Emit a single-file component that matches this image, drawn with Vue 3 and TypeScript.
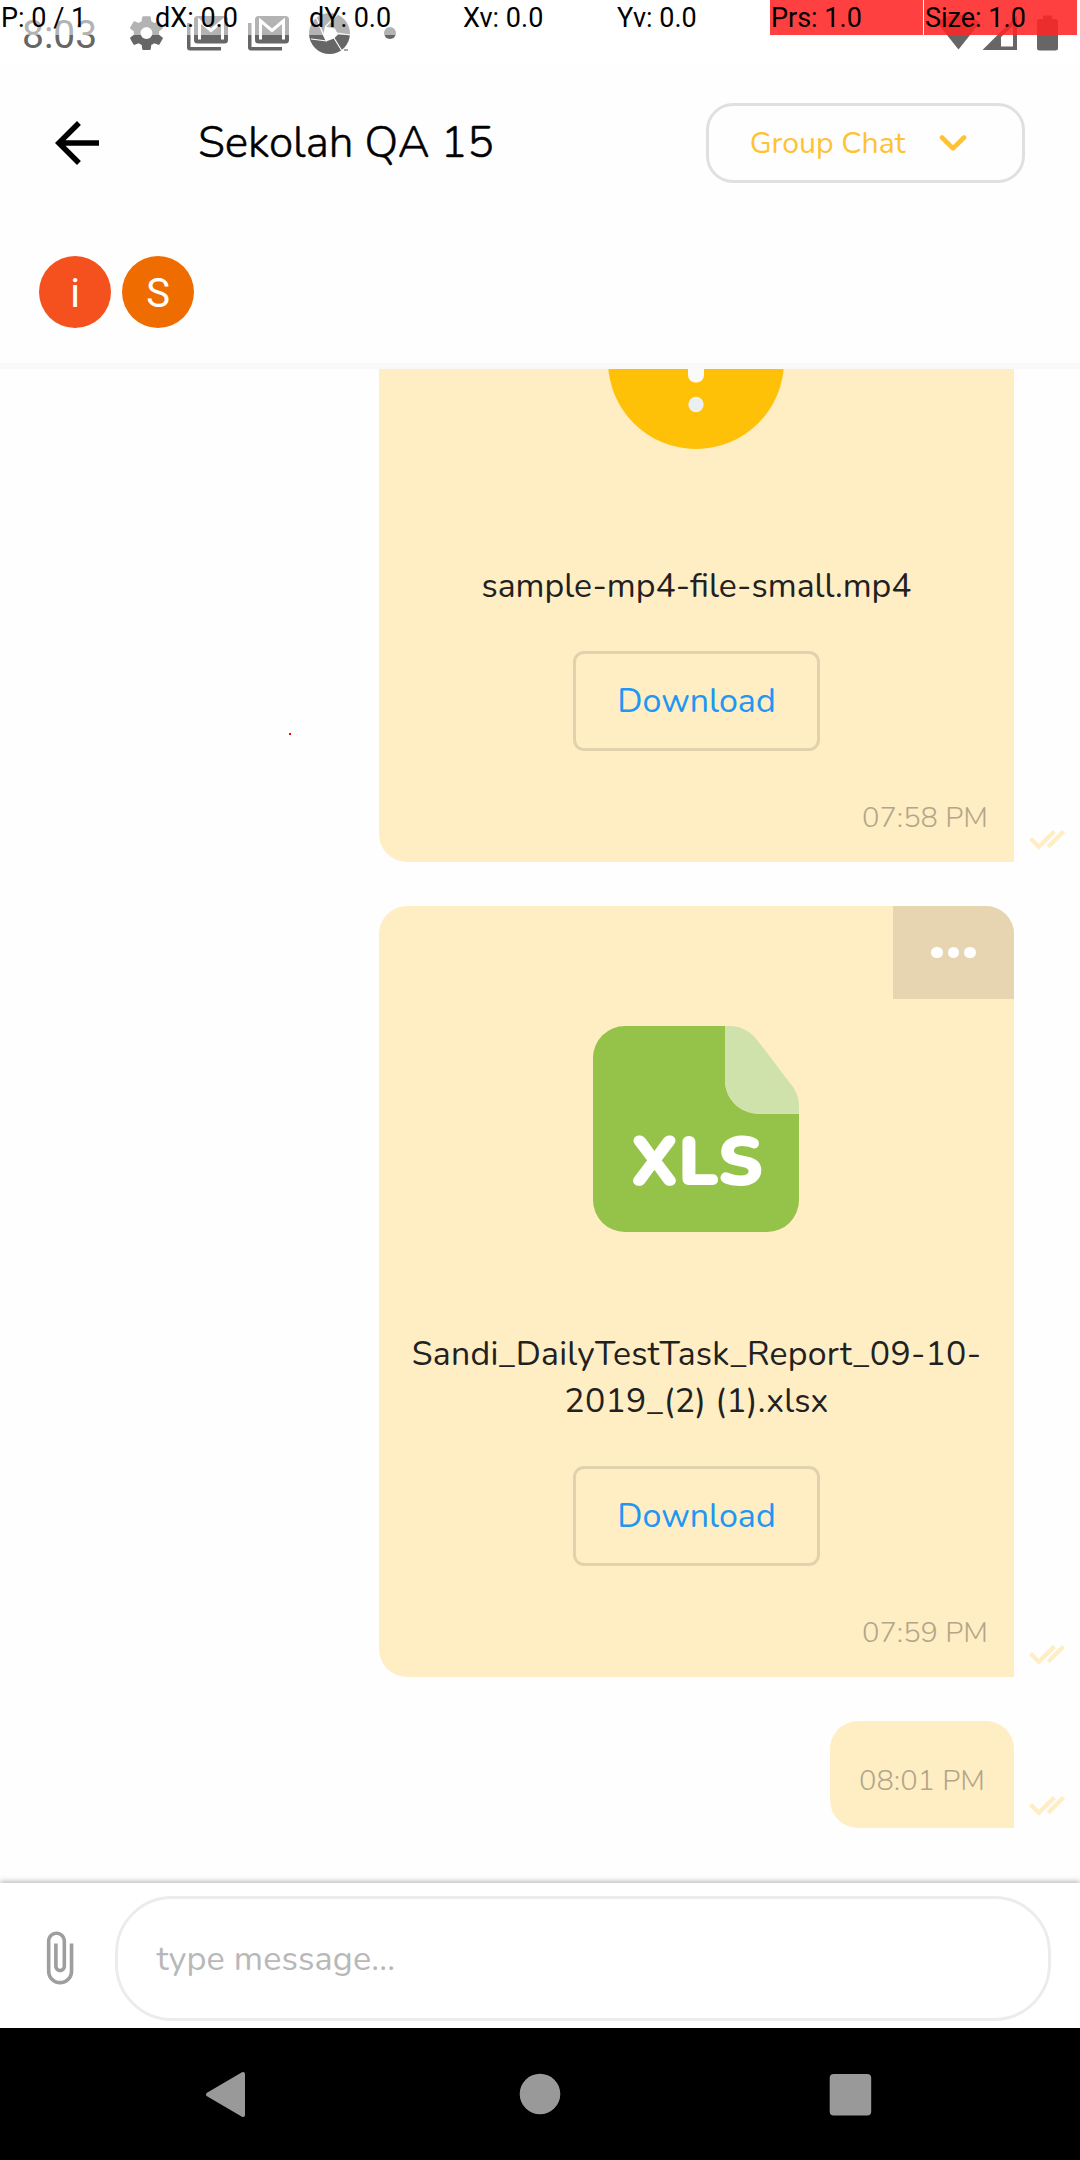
<script setup lang="ts">
interface Message {
  id: number
  time: string
  file?: string
  kind?: 'warning' | 'xls'
  menu?: boolean
}

const pointerStats = ['P: 0 / 1', 'dX: 0.0', 'dY: 0.0', 'Xv: 0.0', 'Yv: 0.0', 'Prs: 1.0', 'Size: 1.0']

const members = [
  { initial: 'i', tone: 'deep' },
  { initial: 'S', tone: 'orange' },
]

const messages: Message[] = [
  { id: 1, kind: 'warning', file: 'sample-mp4-file-small.mp4', time: '07:58 PM' },
  { id: 2, kind: 'xls', file: 'Sandi_DailyTestTask_Report_09-10-2019_(2) (1).xlsx', time: '07:59 PM', menu: true },
  { id: 3, time: '08:01 PM' },
]
</script>

<template>
  <div class="screen">
    <div class="status">
      <span class="clock">8:03</span>
      <svg class="status-icons" width="985" height="63" viewBox="95 0 985 63" fill="#666">
        <!-- settings -->
        <path transform="translate(126.2 12.8) scale(1.69)" fill-rule="evenodd" d="M19.43 12.98c.04-.32.07-.64.07-.98s-.03-.66-.07-.98l2.11-1.65c.19-.15.24-.42.12-.64l-2-3.46c-.12-.22-.39-.3-.61-.22l-2.49 1c-.52-.4-1.08-.73-1.69-.98l-.38-2.65C14.46 2.18 14.25 2 14 2h-4c-.25 0-.46.18-.49.42l-.38 2.65c-.61.25-1.17.59-1.69.98l-2.49-1c-.23-.09-.49 0-.61.22l-2 3.46c-.13.22-.07.49.12.64l2.11 1.65c-.04.32-.07.65-.07.98s.03.66.07.98l-2.11 1.65c-.19.15-.24.42-.12.64l2 3.46c.12.22.39.3.61.22l2.49-1c.52.4 1.08.73 1.69.98l.38 2.65c.03.24.24.42.49.42h4c.25 0 .46-.18.49-.42l.38-2.65c.61-.25 1.17-.59 1.69-.98l2.49 1c.23.09.49 0 .61-.22l2-3.46c.12-.22.07-.49-.12-.64l-2.11-1.65zM12 15.500c-1.930 0-3.500-1.570-3.500-3.500s1.570-3.500 3.500-3.500 3.500 1.570 3.500 3.500-1.570 3.500-3.500 3.500z" />
        <!-- stacked mail notifications -->
        <g v-for="x in [187, 248]" :key="x" :transform="`translate(${x} 16)`">
          <path d="M0 7h3.500v24H34v3.500H3a3 3 0 0 1-3-3z" />
          <rect x="7" y="0" width="34" height="27.500" rx="3.500" />
          <path d="M12.500 23.500V4.800l11.500 9.700L35.500 4.800v18.700" fill="none" stroke="#fff" stroke-width="3" />
        </g>
        <!-- camera shutter -->
        <circle cx="329.500" cy="33.500" r="20.500" />
        <path d="M325 26.500l10 2 3 6-4 4-8 3-3-6z" fill="#fff" />
        <path d="M325 27l13-13M337 33l13 2M334 38l8 13M327 41l-16-2M323.500 35l-7-17" stroke="#fff" stroke-width="1.200" />
        <path d="M344 50h4" stroke="#888" stroke-width="1.500" />
        <circle cx="390" cy="33" r="6" />
        <!-- wifi, signal, battery -->
        <path d="M958.500 49.500L937 22.500q21.500-16 43 0z" />
        <path fill-rule="evenodd" d="M982.500 50L1017 15.500V50zM1001 46.500h12V26l-12 11z" />
        <path d="M1043 15.500h9v3.500h3.500a2.500 2.500 0 0 1 2.500 2.500V48a2.500 2.500 0 0 1-2.500 2.500h-16A2.500 2.500 0 0 1 1037 48V21.500a2.500 2.500 0 0 1 2.500-2.500h3.500z" />
      </svg>
      <div class="pointer-bar">
        <span v-for="(s, i) in pointerStats" :key="s" class="stat" :class="{ hot: i > 4 }">{{ s }}</span>
      </div>
    </div>

    <header class="header">
      <svg class="back" width="66" height="66" viewBox="0 0 24 24"><path d="M20 11H7.830l5.590-5.590L12 4l-8 8 8 8 1.410-1.410L7.830 13H20v-2z" /></svg>
      <h1 class="title">Sekolah QA 15</h1>
      <button class="dropdown">
        <span>Group Chat</span>
        <svg width="28" height="18" viewBox="0 0 28 18"><path d="M3 3.500l11 10.800L25 3.500" fill="none" stroke="#ffc233" stroke-width="4.600" stroke-linecap="round" stroke-linejoin="round" /></svg>
      </button>
    </header>

    <div class="members">
      <span v-for="m in members" :key="m.initial" class="avatar" :class="m.tone">{{ m.initial }}</span>
    </div>

    <main class="messages">
      <div v-for="m in messages" :key="m.id" class="row">
        <article class="bubble" :class="{ small: !m.file }">
          <button v-if="m.menu" class="menu"><i /><i /><i /></button>
          <template v-if="m.file">
            <svg v-if="m.kind === 'warning'" class="icon" width="206" height="206" viewBox="0 0 206 206">
              <circle cx="103" cy="103" r="88" fill="#ffc108" />
              <rect x="95" y="55" width="16" height="69.500" rx="7.500" fill="#fafafa" />
              <circle cx="103" cy="146.500" r="7.700" fill="#eceff1" />
            </svg>
            <svg v-else class="icon" width="206" height="206" viewBox="0 0 206 206">
              <path d="M32 0H132V54C132 73 147 87.700 166 87.700H206V174a32 32 0 0 1-32 32H32a32 32 0 0 1-32-32V32A32 32 0 0 1 32 0z" fill="#95c249" />
              <path d="M132 0h5c11 0 21 5.500 27.700 14.700L200 61c4 6 6 12 6 20v6.700h-40C147 87.700 132 73 132 54z" fill="#cfe2ab" />
              <text x="37" y="158.500" class="xls" textLength="133">XLS</text>
            </svg>
            <p class="name" :class="{ wrapped: m.file.length > 32 }">{{ m.file }}</p>
            <button class="download">Download</button>
          </template>
          <time class="time">{{ m.time }}</time>
        </article>
        <svg class="ticks" width="36" height="20" viewBox="0 0 36 20" fill="none" stroke="#ffedc4" stroke-width="4.200">
          <path d="M1.500 8.500l8.300 8.200L25.300 1.500M34.500 1.500L19.200 16.700" />
        </svg>
      </div>
      <i class="touch" />
    </main>

    <footer class="composer">
      <svg class="clip" width="57.800" height="57.800" viewBox="0 0 24 24"><path fill="#9e9e9e" d="M18 6v11.500c0 3.040-2.460 5.500-5.500 5.500S7 20.540 7 17.500V5c0-2.210 1.790-4 4-4s4 1.790 4 4v10.500c0 1.380-1.120 2.500-2.500 2.500S10 16.880 10 15.500V6h1.500v9.500c0 .55.45 1 1 1s1-.45 1-1V5c0-1.380-1.120-2.500-2.500-2.500S8.500 3.620 8.500 5v12.500c0 2.210 1.790 4 4 4s4-1.790 4-4V6z" /></svg>
      <input class="field" placeholder="type message..." />
    </footer>

    <nav class="nav">
      <svg width="1080" height="132" viewBox="0 0 1080 132" fill="#999">
        <path d="M243 46L208 66.500l35 20.500z" stroke="#999" stroke-width="4" stroke-linejoin="round" />
        <circle cx="540" cy="66" r="20.300" />
        <rect x="829.700" y="46" width="41.500" height="41.500" rx="4" />
      </svg>
    </nav>
  </div>
</template>

<style>
body { margin: 0; background: #fefefe; }
</style>

<style scoped>
.screen {
  width: 1080px;
  height: 2160px;
  display: flex;
  flex-direction: column;
  overflow: hidden;
  background: #fefefe;
  color: #000;
  font-family: Nunito, Lato, sans-serif;
  font-weight: 400;
}
button { font: inherit; padding: 0; background: none; box-sizing: border-box; }

.status { position: relative; display: flex; height: 63px; flex: none; background: #fff; }
.clock { width: 73px; padding-left: 22px; font: 39px/70px Roboto, sans-serif; color: #666; white-space: nowrap; }
.pointer-bar { position: absolute; inset: 0 0 auto 0; height: 35px; display: flex; gap: 1px; background: rgba(255, 255, 255, .5); }
.stat { width: 153px; height: 35px; box-sizing: border-box; padding-left: 1px; font: 27px/37px Roboto, sans-serif; white-space: nowrap; }
.stat.hot { background: rgba(255, 0, 0, .75); }

.header { display: flex; align-items: center; height: 160px; flex: none; }
.back { margin-left: 44px; }
.title { margin: 0 0 0 88px; width: 508px; font-size: 44.2px; font-weight: 300; -webkit-text-stroke: .5px #000; line-height: 60px; white-space: nowrap; }
.dropdown { display: flex; align-items: center; gap: 33px; width: 319px; height: 80px; padding: 0 0 0 40px; border: 3px solid #e0e0e0; border-radius: 27px; color: #ffc233; font-size: 30.2px; }
.dropdown span { width: 157px; white-space: nowrap; }

.members { display: flex; gap: 11px; padding: 33px 39px 35px; height: 72px; flex: none; border-bottom: 6px solid #f9f9f9; }
.avatar { width: 72px; height: 72px; border-radius: 50%; color: #fff; font: 40px/75px Roboto, sans-serif; text-align: center; }
.deep { background: #f4511e; }
.orange { background: #ef6c00; }

.messages { position: relative; flex: 1; min-height: 0; display: flex; flex-direction: column; justify-content: flex-end; gap: 44px; padding-bottom: 55px; overflow: hidden; }
.row { display: flex; justify-content: flex-end; align-items: flex-end; gap: 15px; padding-right: 15px; flex: none; }
.ticks { margin-bottom: 12.5px; flex: none; }
.bubble { position: relative; display: flex; flex-direction: column; align-items: center; width: 635px; box-sizing: border-box; padding: 120px 27px 26.5px; border-radius: 28px 28px 0 28px; background: #ffedc4; overflow: hidden; }
.menu { position: absolute; top: 0; right: 0; width: 121px; height: 93px; border: 0; background: #e6d5b0; display: flex; justify-content: center; align-items: center; gap: 5px; }
.menu i { width: 11.5px; height: 11.5px; border-radius: 50%; background: #fff; }
.icon { display: block; margin-right: 1px; }
.xls { font-size: 70px; font-weight: 900; fill: #fff; }
.name { margin: 99px -10px 0; width: 600px; text-align: center; font-size: 33.8px; line-height: 47px; color: #212121; }
.wrapped { letter-spacing: .27px; }
.download { margin-top: 41px; width: 247px; height: 99.5px; padding-top: 1px; border: 3px solid #e1d1ac; border-radius: 11px; color: #2196f3; font-size: 34px; }
.time { align-self: flex-end; margin: 49px -1px 0 0; font-size: 29px; line-height: 36px; font-weight: 300; color: #b2a689; white-space: nowrap; }
.small { width: 184px; padding: 42px 30px 29px; }
.small .time { margin-top: 0; }
.touch { position: absolute; left: 289px; top: 364px; width: 2px; height: 2px; background: #f00; }

.composer { position: relative; display: flex; align-items: center; height: 145px; flex: none; box-sizing: border-box; padding: 6px 0 0 29.6px; background: #fff; box-shadow: 0 -2px 5px rgba(0, 0, 0, .25); }
.clip { flex: none; margin-bottom: 2px; }
.field { margin-left: 28px; width: 936px; height: 125px; box-sizing: border-box; padding: 0 38px; border: 3px solid #ececec; border-radius: 57px; background: #fff; font: inherit; font-size: 34.2px; letter-spacing: .13px; }
.field::placeholder { color: #b8b8b8; }

.nav { height: 132px; flex: none; background: #000; }
.nav svg { display: block; }
</style>
